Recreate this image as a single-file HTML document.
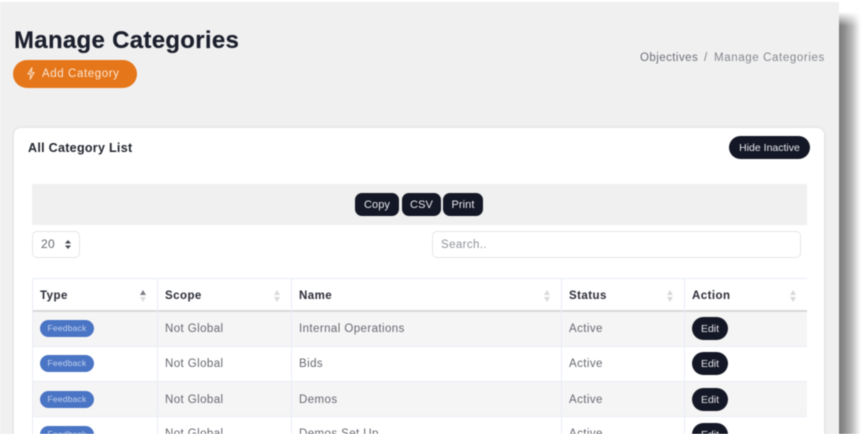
<!DOCTYPE html>
<html><head><meta charset="utf-8"><style>
html,body{margin:0;padding:0;width:868px;height:434px;overflow:hidden;background:#fff}
*{box-sizing:border-box}
#w{position:absolute;left:0;top:0;width:868px;height:434px;overflow:hidden;filter:blur(.5px);font-family:"Liberation Sans",sans-serif}
#w div{position:absolute;white-space:nowrap}
.sh{left:839px;top:12px;width:22px;height:430px;background:linear-gradient(90deg,#7a7a7a 0,#8e8e8e 25%,#bbb 60%,#eee 88%,#fff 100%);-webkit-mask-image:linear-gradient(180deg,transparent 0,#000 14px);mask-image:linear-gradient(180deg,transparent 0,#000 14px)}
.pg{left:0;top:2px;width:839px;height:440px;background:#f0f0f0}
.card{left:14px;top:128px;width:810px;height:320px;background:#fff;border-radius:7px;box-shadow:0 0 3px rgba(70,90,140,.18)}
.btn{background:#141725;color:#e8e8ee;text-align:center;font-size:11px;letter-spacing:.1px}
.th{font-weight:700;font-size:11.5px;color:#2b2d38;letter-spacing:.45px;top:289px;line-height:14px}
.td{font-size:11.5px;color:#666870;letter-spacing:.42px;line-height:14px}
.pill{left:40px;width:54px;height:17px;border-radius:9px;background:#4a74c4;color:#c3d3f0;font-size:8.5px;line-height:17px;text-align:center;letter-spacing:.2px}
.edit{left:692px;width:36px;height:23px;border-radius:12px;background:#141725;color:#e4e4ea;font-size:10.5px;line-height:24px;text-align:center}
.hl{background:#e9edf6}
.sort{width:6px;height:14px;top:289px}
</style></head><body><div id="w">
<div class="sh"></div>
<div class="pg"></div>

<div style="left:14px;top:26px;font-size:24px;font-weight:700;color:#1b1e2c;line-height:30px;letter-spacing:.3px;-webkit-text-stroke:.2px #1b1e2c">Manage Categories</div>
<div style="left:13px;top:60px;width:124px;height:28px;border-radius:14px;background:#e5761a"></div>
<svg style="position:absolute;left:26px;top:66px" width="10" height="15" viewBox="0 0 10 15"><path d="M6 1.500 2 8h2.800L4 13.500 8 6.500H5.200Z" fill="none" stroke="#f8dcc0" stroke-width="1.100"/></svg>
<div style="left:42px;top:67px;font-size:11.5px;line-height:15px;color:#fbe6d2;letter-spacing:.6px">Add Category</div>

<div style="left:640px;top:51px;font-size:11.5px;line-height:15px;color:#6c6f78;letter-spacing:.45px">Objectives</div>
<div style="left:704px;top:51px;font-size:11.5px;line-height:15px;color:#7d8088">/</div>
<div style="left:714px;top:51px;font-size:11.5px;line-height:15px;color:#85888f;letter-spacing:.62px">Manage Categories</div>

<div class="card"></div>
<div style="left:28px;top:141px;font-size:12.5px;font-weight:700;color:#23252f;line-height:15px;letter-spacing:.3px">All Category List</div>
<div class="btn" style="left:729px;top:136px;width:81px;height:23px;border-radius:12px;font-size:10.5px;line-height:24px;letter-spacing:0">Hide Inactive</div>

<div style="left:32px;top:184px;width:775px;height:41px;background:#f0f0f0"></div>
<div class="btn" style="left:355px;top:193px;width:44px;height:23px;border-radius:7px;line-height:24px">Copy</div>
<div class="btn" style="left:402px;top:193px;width:39px;height:23px;border-radius:7px;line-height:24px">CSV</div>
<div class="btn" style="left:443px;top:193px;width:40px;height:23px;border-radius:7px;line-height:24px">Print</div>

<div style="left:32px;top:231px;width:48px;height:27px;border:1.5px solid #e6e6e6;border-radius:5px;background:#fff"></div>
<div style="left:41px;top:237px;font-size:12px;line-height:15px;color:#666870;letter-spacing:.3px">20</div>
<svg style="position:absolute;left:65px;top:240px" width="6" height="9" viewBox="0 0 6 9"><path d="M3 0 6 3.500H0ZM3 9 0 5.500H6Z" fill="#444650"/></svg>
<div style="left:432px;top:231px;width:369px;height:27px;border:1.5px solid #e6e6e6;border-radius:5px;background:#fff"></div>
<div style="left:441px;top:238px;font-size:11.5px;line-height:15px;color:#8f929a;letter-spacing:.4px">Search..</div>

<div class="hl" style="left:32px;top:278px;width:775px;height:1px"></div>
<div style="left:32px;top:311px;width:775px;height:36px;background:#f5f5f5"></div>
<div style="left:32px;top:382px;width:775px;height:35px;background:#f5f5f5"></div>
<div style="left:32px;top:310px;width:775px;height:2px;background:#d8d8da"></div>
<div class="hl" style="left:32px;top:346px;width:775px;height:1px"></div>
<div class="hl" style="left:32px;top:381px;width:775px;height:1px"></div>
<div class="hl" style="left:32px;top:416px;width:775px;height:1px"></div>
<div class="hl" style="left:32px;top:278px;width:1px;height:160px"></div>
<div class="hl" style="left:157px;top:278px;width:1px;height:160px"></div>
<div class="hl" style="left:291px;top:278px;width:1px;height:160px"></div>
<div class="hl" style="left:561px;top:278px;width:1px;height:160px"></div>
<div class="hl" style="left:684px;top:278px;width:1px;height:160px"></div>

<div class="th" style="left:40px">Type</div>
<div class="th" style="left:165px">Scope</div>
<div class="th" style="left:299px">Name</div>
<div class="th" style="left:569px">Status</div>
<div class="th" style="left:692px">Action</div>

<svg class="sort" style="position:absolute;left:140px" viewBox="0 0 6 14"><path d="M3 1 6 6H0Z" fill="#7b7d85"/><path d="M3 13 0 8H6Z" fill="#dcdcdf"/></svg>
<svg class="sort" style="position:absolute;left:274px" viewBox="0 0 6 14"><path d="M3 1 6 6H0ZM3 13 0 8H6Z" fill="#d8d9dc"/></svg>
<svg class="sort" style="position:absolute;left:544px" viewBox="0 0 6 14"><path d="M3 1 6 6H0ZM3 13 0 8H6Z" fill="#d8d9dc"/></svg>
<svg class="sort" style="position:absolute;left:667px" viewBox="0 0 6 14"><path d="M3 1 6 6H0ZM3 13 0 8H6Z" fill="#d8d9dc"/></svg>
<svg class="sort" style="position:absolute;left:790px" viewBox="0 0 6 14"><path d="M3 1 6 6H0ZM3 13 0 8H6Z" fill="#d8d9dc"/></svg>

<div class="pill" style="top:320px">Feedback</div>
<div class="td" style="left:165px;top:322px">Not Global</div>
<div class="td" style="left:299px;top:322px">Internal Operations</div>
<div class="td" style="left:569px;top:322px">Active</div>
<div class="edit" style="top:317px">Edit</div>

<div class="pill" style="top:355px">Feedback</div>
<div class="td" style="left:165px;top:357px">Not Global</div>
<div class="td" style="left:299px;top:357px">Bids</div>
<div class="td" style="left:569px;top:357px">Active</div>
<div class="edit" style="top:352px">Edit</div>

<div class="pill" style="top:391px">Feedback</div>
<div class="td" style="left:165px;top:393px">Not Global</div>
<div class="td" style="left:299px;top:393px">Demos</div>
<div class="td" style="left:569px;top:393px">Active</div>
<div class="edit" style="top:388px">Edit</div>

<div class="pill" style="top:426px">Feedback</div>
<div class="td" style="left:165px;top:427px">Not Global</div>
<div class="td" style="left:299px;top:427px">Demos Set Up</div>
<div class="td" style="left:569px;top:427px">Active</div>
<div class="edit" style="top:423px">Edit</div>
</div></body></html>
